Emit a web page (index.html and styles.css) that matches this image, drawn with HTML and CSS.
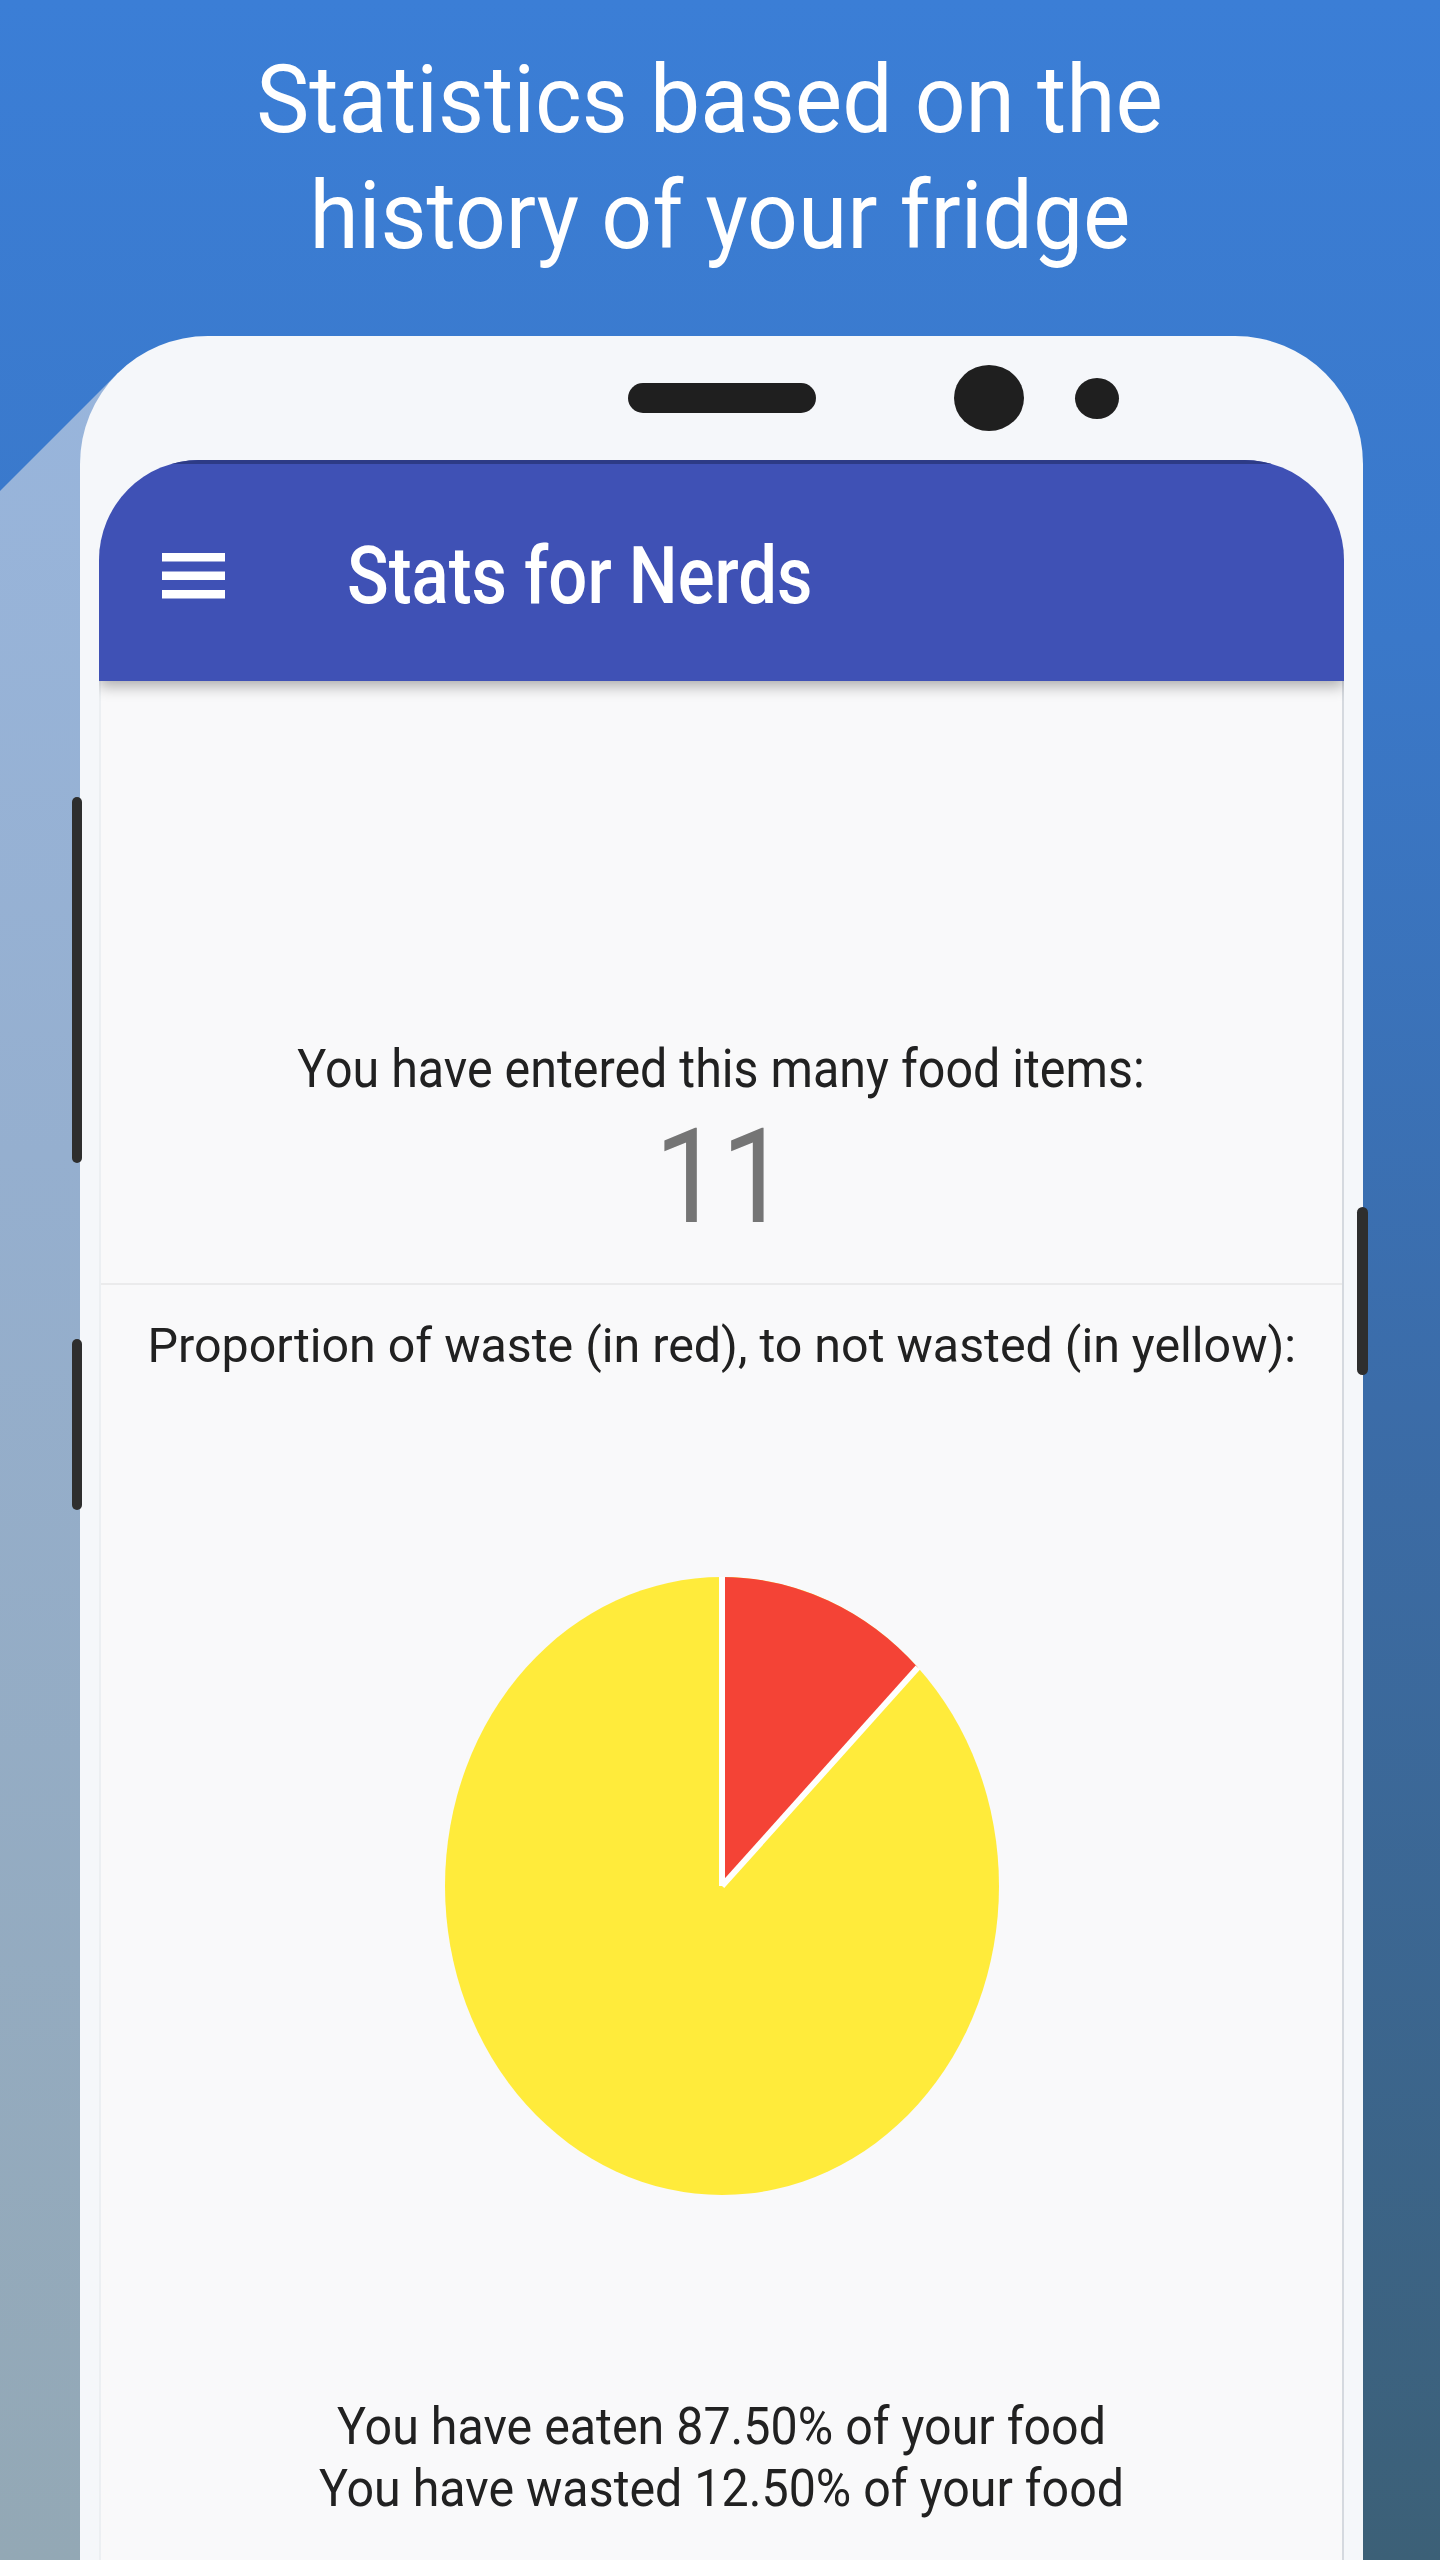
FILE: index.html
```html
<!DOCTYPE html>
<html lang="en">
<head>
<meta charset="utf-8">
<title>Stats for Nerds</title>
<link rel="stylesheet" href="styles.css">
</head>
<body>
<div class="stage">
  <div class="long-shadow"></div>
  <h1 class="headline"><span class="headline-line headline-first">Statistics based on the</span><span class="headline-line">history of your fridge</span></h1>
  <div class="phone">
    <span class="side-btn side-btn-left-top"></span>
    <span class="side-btn side-btn-left-bottom"></span>
    <span class="side-btn side-btn-right"></span>
    <div class="phone-top">
      <span class="speaker"></span>
      <span class="camera"></span>
      <span class="sensor"></span>
    </div>
    <div class="screen">
      <header class="appbar">
        <svg class="menu-icon" viewBox="0 0 63 46" width="63" height="46" aria-hidden="true">
          <rect x="0" y="0" width="63" height="8.5" fill="#fff"/>
          <rect x="0" y="18.5" width="63" height="8.5" fill="#fff"/>
          <rect x="0" y="37" width="63" height="8.5" fill="#fff"/>
        </svg>
        <h2 class="title"><span class="title-text">Stats for Nerds</span></h2>
      </header>
      <main class="content">
        <p class="label"><span class="squeeze-a">You have entered this many food items:</span></p>
        <p class="number"><span class="squeeze-n">11</span></p>
        <hr class="divider">
        <p class="label-2"><span class="squeeze-b">Proportion of waste (in red), to not wasted (in yellow):</span></p>
        <svg class="pie" viewBox="-100 -100 200 200" preserveAspectRatio="none" aria-hidden="true">
          <circle cx="0" cy="0" r="100" fill="#ffeb3b"/>
          <path d="M0 0 L0 -100 A100 100 0 0 1 70.71 -70.71 Z" fill="#f44336"/>
          <path d="M0 0 L0 -100" stroke="#fff" stroke-width="6" vector-effect="non-scaling-stroke"/>
          <path d="M0 0 L70.71 -70.71" stroke="#fff" stroke-width="6" vector-effect="non-scaling-stroke"/>
        </svg>
        <p class="summary"><span class="summary-line">You have eaten 87.50% of your food</span><span class="summary-line">You have wasted 12.50% of your food</span></p>
      </main>
    </div>
  </div>
</div>
</body>
</html>
```

FILE: styles.css
```css
* { box-sizing: border-box; }

html, body {
  margin: 0;
  padding: 0;
}

body {
  width: 1440px;
  height: 2560px;
  overflow: hidden;
  font-family: Roboto, "Noto Sans", "Liberation Sans", sans-serif;
}

.stage {
  position: relative;
  width: 1440px;
  height: 2560px;
  overflow: hidden;
  background: linear-gradient(180deg, #3b7ed6 0%, #3a78c9 25%, #3b6ca8 55%, #3c6077 100%);
}

.long-shadow {
  position: absolute;
  inset: 0;
  background: linear-gradient(180deg, #9ab8e2 0%, #95afcf 45%, #93a8b5 100%);
  clip-path: polygon(0 491px, 118px 373px, 118px 100%, 0 100%);
}

.headline {
  position: relative;
  margin: 0;
  padding-top: 42px;
  font-weight: 400;
  font-size: 94px;
  line-height: 116px;
  color: #ffffff;
  text-align: center;
}

.headline-line {
  display: block;
  transform: scaleX(0.95);
}

.headline-first {
  padding-right: 22px;
}

.phone {
  position: relative;
  display: flex;
  flex-direction: column;
  margin: 62px 0 0 80px;
  width: 1283px;
  height: 2224px;
  padding: 0 19px;
  border-radius: 128px 128px 0 0;
  background: #f5f7fa;
}

.side-btn {
  position: absolute;
  width: 10px;
  background: #2e2e2e;
  border-radius: 6px;
  z-index: 3;
}

.side-btn-left-top { left: -8px; top: 461px; height: 366px; }
.side-btn-left-bottom { left: -8px; top: 1003px; height: 171px; }
.side-btn-right { left: 1277px; top: 871px; height: 168px; width: 11px; }

.phone-top {
  display: flex;
  align-items: center;
  height: 124px;
  padding-left: 529px;
  flex-shrink: 0;
}

.speaker {
  width: 188px;
  height: 30px;
  border-radius: 15px;
  background: #1f1f1f;
  margin-right: 138px;
}

.camera {
  width: 70px;
  height: 66px;
  border-radius: 50%;
  background: #1f1f1f;
  margin-right: 51px;
}

.sensor {
  width: 44px;
  height: 41px;
  border-radius: 50%;
  background: #1f1f1f;
}

.screen {
  flex: 1;
  display: flex;
  flex-direction: column;
  border-radius: 100px 100px 0 0;
  overflow: hidden;
  background: #f9f9fa;
}

.appbar {
  position: relative;
  z-index: 1;
  display: flex;
  align-items: center;
  height: 221px;
  flex-shrink: 0;
  padding: 6px 0 0 63px;
  background: #3f51b5;
  border-top: 4px solid #2d3b86;
  box-shadow: 0 5px 14px rgba(0, 0, 0, 0.32);
}

.menu-icon {
  display: block;
  flex-shrink: 0;
}

.title {
  margin: 0 0 0 122px;
  font-size: 80px;
  line-height: 80px;
  font-weight: 500;
  color: #ffffff;
}

.title-text {
  display: inline-block;
  transform: scaleX(0.86);
  transform-origin: left center;
}

.content {
  flex: 1;
  padding-top: 357px;
  border-left: 2px solid #eceff2;
  border-right: 2px solid #d5d9df;
  color: #212121;
  text-align: center;
}

.label {
  margin: 0;
  font-size: 53px;
  line-height: 62px;
}

.squeeze-a {
  display: inline-block;
  transform: scaleX(0.913);
}

.number {
  margin: 11px 0 0;
  font-size: 132px;
  line-height: 132px;
  color: #757575;
}

.squeeze-n {
  display: inline-block;
  transform: scaleX(0.9);
}

.divider {
  margin: 40px 0 0;
  height: 2px;
  border: 0;
  background: #ebebec;
}

.label-2 {
  margin: 31px 0 0;
  font-size: 49px;
  line-height: 60px;
}

.squeeze-b {
  display: inline-block;
  transform: scaleX(0.987);
}

.pie {
  display: block;
  width: 554px;
  height: 618px;
  margin: 201px auto 0;
}

.summary {
  margin: 201px 0 0;
  font-size: 52px;
  line-height: 62px;
}

.summary-line {
  display: block;
  transform: scaleX(0.93);
}
```
